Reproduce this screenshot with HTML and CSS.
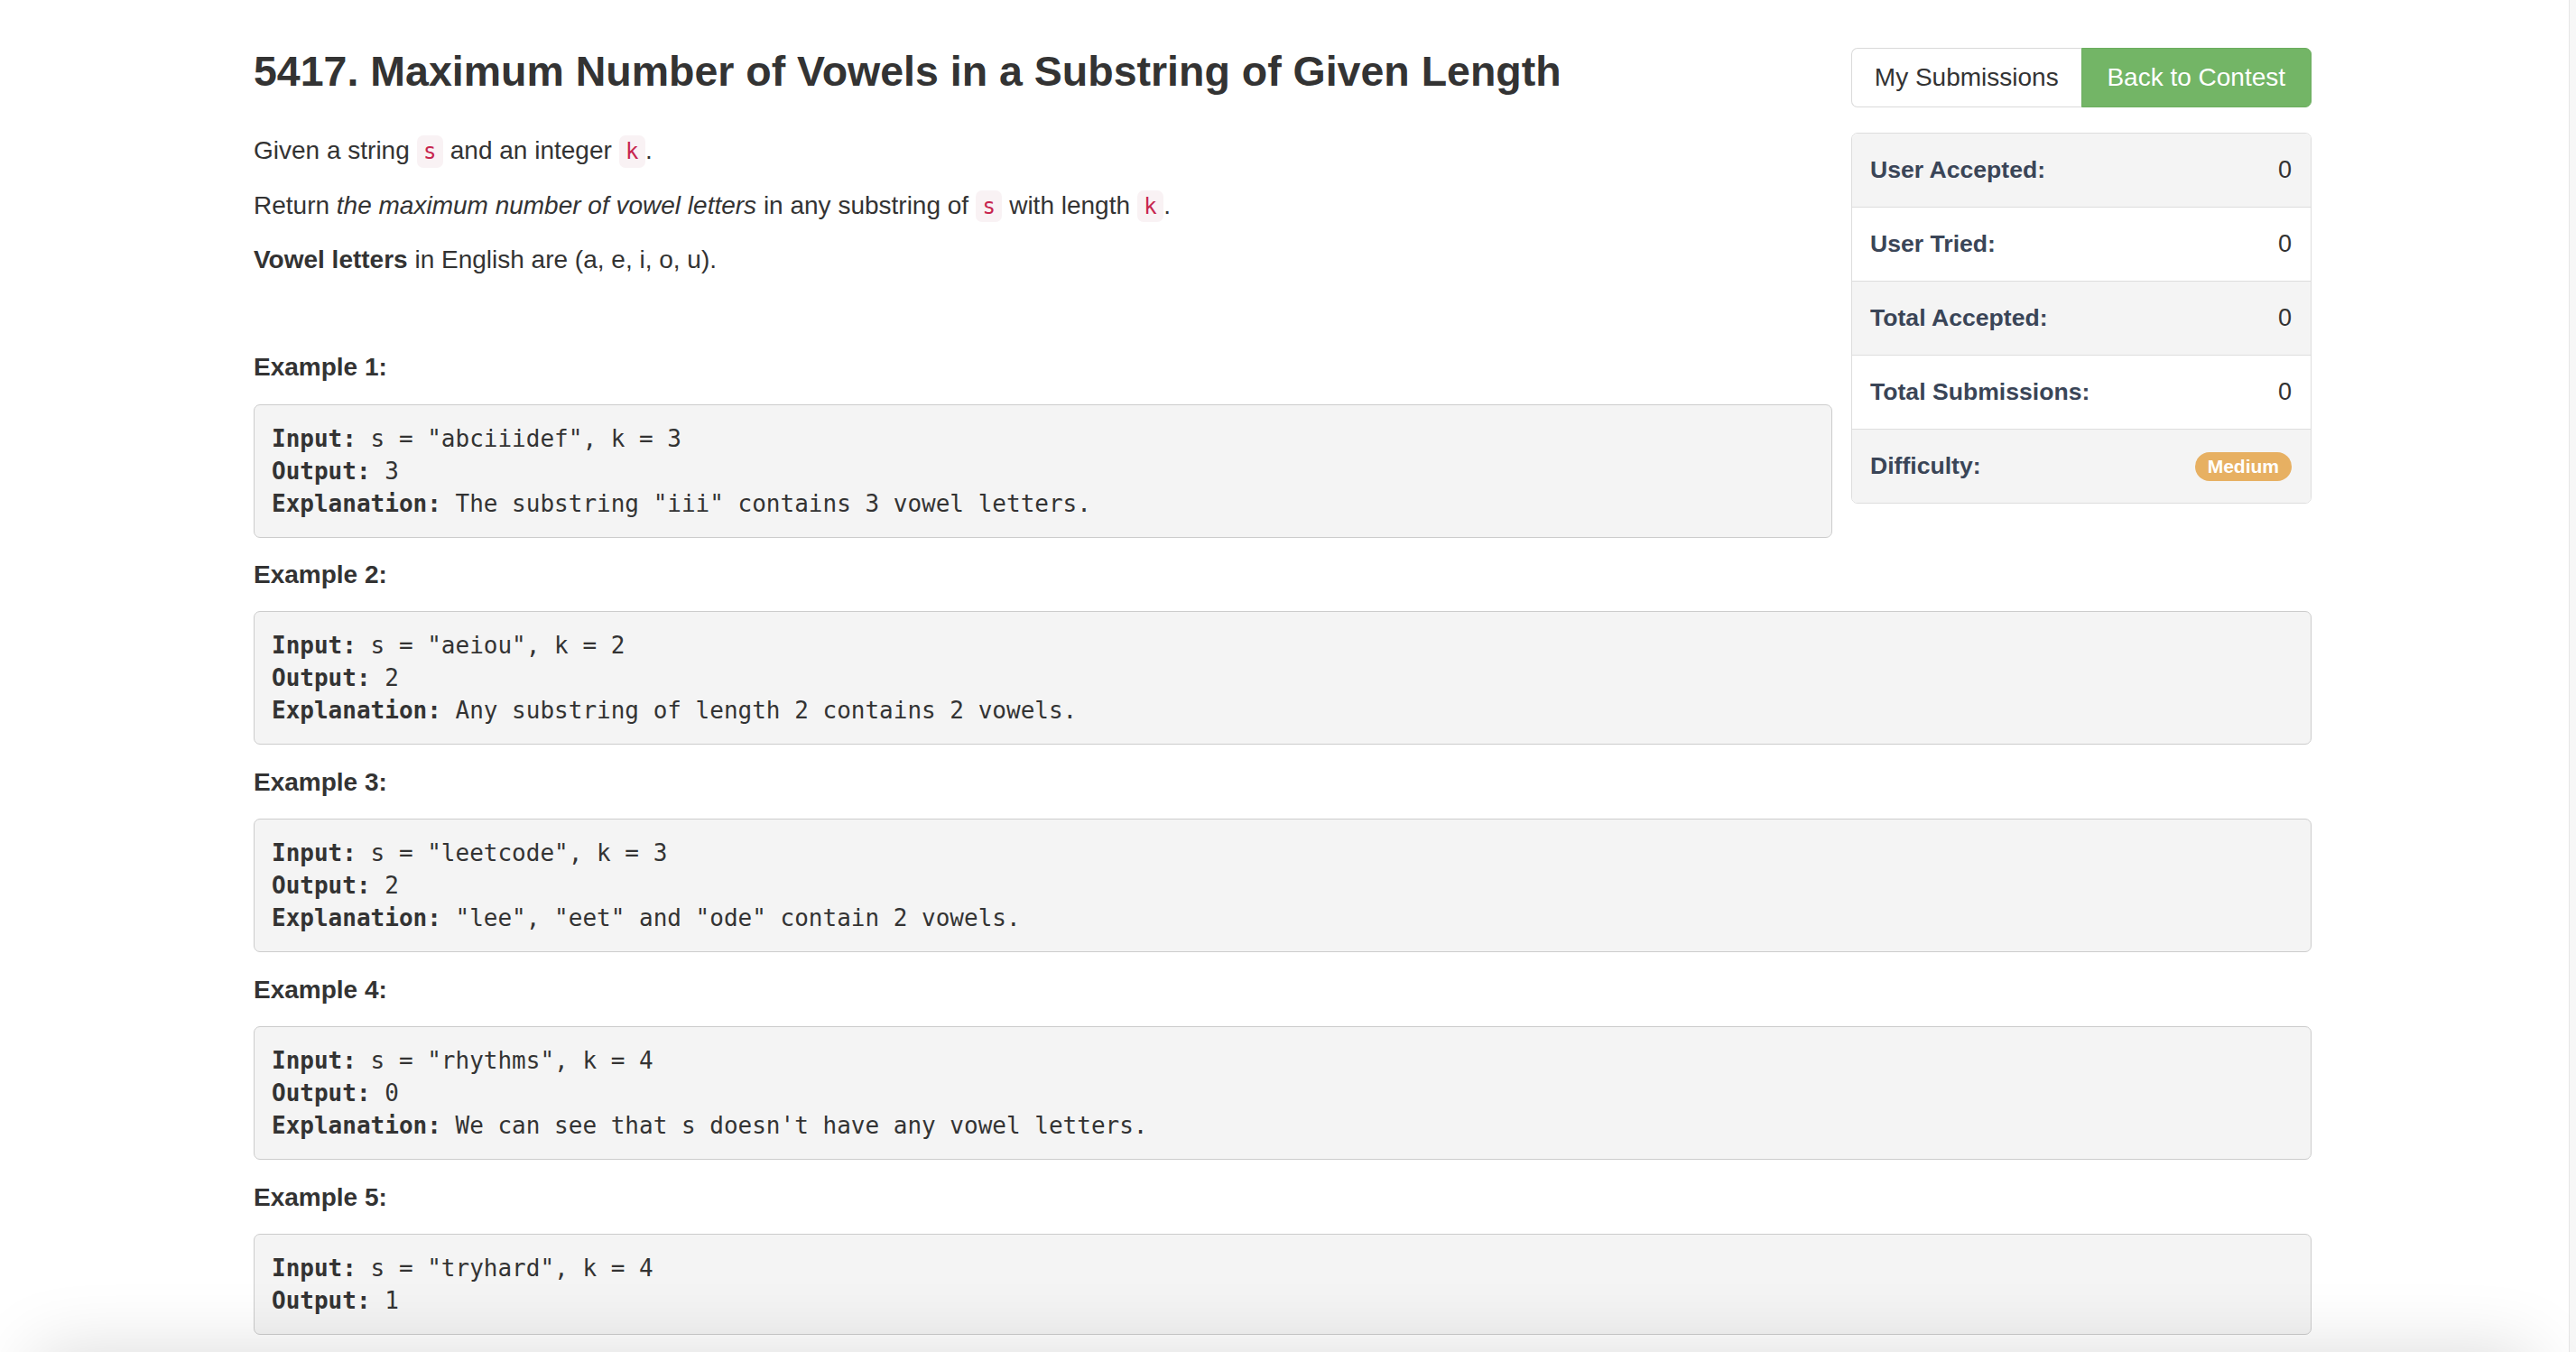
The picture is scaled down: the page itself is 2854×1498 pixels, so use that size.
FILE: index.html
```html
<!DOCTYPE html>
<html lang="en">
<head>
<meta charset="utf-8">
<title>5417. Maximum Number of Vowels in a Substring of Given Length</title>
<link rel="stylesheet" href="styles.css">
</head>
<body>
<div class="page">
  <main class="main">
    <div class="container">
      <aside class="sidebar">
        <div class="btn-group">
          <a class="btn btn-default">My Submissions</a>
          <a class="btn btn-success">Back to Contest</a>
        </div>
        <ul class="stats">
          <li class="stat-row"><span class="stat-label">User Accepted:</span><span class="stat-value">0</span></li>
          <li class="stat-row"><span class="stat-label">User Tried:</span><span class="stat-value">0</span></li>
          <li class="stat-row"><span class="stat-label">Total Accepted:</span><span class="stat-value">0</span></li>
          <li class="stat-row"><span class="stat-label">Total Submissions:</span><span class="stat-value">0</span></li>
          <li class="stat-row"><span class="stat-label">Difficulty:</span><span class="badge badge-medium">Medium</span></li>
        </ul>
      </aside>

      <h3 class="title">5417. Maximum Number of Vowels in a Substring of Given Length</h3>

      <div class="question">
        <p>Given a string <code>s</code> and an integer <code>k</code>.</p>
        <p>Return <em>the maximum number of vowel letters</em> in any substring of <code>s</code> with length <code>k</code>.</p>
        <p><strong>Vowel letters</strong> in English are (a, e, i, o, u).</p>
        <p>&nbsp;</p>
        <p><strong>Example 1:</strong></p>
<pre><strong>Input:</strong> s = "abciiidef", k = 3
<strong>Output:</strong> 3
<strong>Explanation:</strong> The substring "iii" contains 3 vowel letters.</pre>
        <p><strong>Example 2:</strong></p>
<pre><strong>Input:</strong> s = "aeiou", k = 2
<strong>Output:</strong> 2
<strong>Explanation:</strong> Any substring of length 2 contains 2 vowels.</pre>
        <p><strong>Example 3:</strong></p>
<pre><strong>Input:</strong> s = "leetcode", k = 3
<strong>Output:</strong> 2
<strong>Explanation:</strong> "lee", "eet" and "ode" contain 2 vowels.</pre>
        <p><strong>Example 4:</strong></p>
<pre><strong>Input:</strong> s = "rhythms", k = 4
<strong>Output:</strong> 0
<strong>Explanation:</strong> We can see that s doesn't have any vowel letters.</pre>
        <p><strong>Example 5:</strong></p>
<pre><strong>Input:</strong> s = "tryhard", k = 4
<strong>Output:</strong> 1</pre>
      </div>
    </div>
  </main>
  <div class="scroll-track"></div>
</div>
<div class="bottom-shade"></div>
</body>
</html>
```

FILE: styles.css
```css
html, body {
  margin: 0;
  padding: 0;
  height: 100%;
  overflow: hidden;
  background: #ffffff;
}

body {
  font-family: "Liberation Sans", Arial, Helvetica, sans-serif;
  font-size: 28px;
  color: #333333;
}

.page {
  display: flex;
  height: 100%;
}

.main {
  flex: 1 1 auto;
  min-width: 0;
}

.scroll-track {
  flex: 0 0 7px;
  border-left: 1px solid #e6e6e6;
  background: #f7f7f7;
}

.container {
  width: 2280px;
  margin: 0 auto;
  padding-top: 53px;
  transform: translateX(-2px);
}

/* Sidebar */
.sidebar {
  float: right;
  width: 510px;
  margin-left: 21px;
}

.btn-group {
  display: flex;
  height: 66px;
}

.btn {
  flex: 1 1 0;
  display: flex;
  align-items: center;
  justify-content: center;
  font-size: 28px;
  text-decoration: none;
  box-sizing: border-box;
  border: 1px solid #dadada;
}

.btn-default {
  background: #ffffff;
  color: #333333;
  border-radius: 7px 0 0 7px;
  border-right: none;
}

.btn-success {
  background: #73b566;
  border-color: #6cad5f;
  color: #ffffff;
  border-radius: 0 7px 7px 0;
}

.stats {
  list-style: none;
  margin: 28px 0 0;
  padding: 0;
  border: 1px solid #dddddd;
  border-radius: 7px;
  overflow: hidden;
}

.stat-row {
  display: flex;
  align-items: center;
  justify-content: space-between;
  height: 81px;
  padding: 0 21px 0 20px;
  background: #f4f4f4;
}

.stat-row + .stat-row {
  border-top: 1px solid #dddddd;
}

.stat-row:nth-child(even) {
  background: #ffffff;
}

.stat-label {
  font-weight: bold;
  font-size: 26.6px;
  color: #3a4557;
}

.stat-value {
  font-size: 27px;
  color: #333333;
}

.badge {
  display: inline-block;
  font-weight: bold;
  font-size: 21px;
  line-height: 24px;
  padding: 4px 14px;
  border-radius: 16px;
  color: #ffffff;
}

.badge-medium {
  background: #e7b062;
}

/* Title */
.title {
  margin: 0 0 42px;
  font-size: 46.5px;
  line-height: 53px;
  font-weight: bold;
  color: #333333;
}

/* Question body */
.question p {
  margin: 0 0 21.5px;
  line-height: 38px;
}

.question code {
  font-family: "DejaVu Sans Mono", "Liberation Mono", monospace;
  font-size: 24px;
  color: #c7254e;
  background: #f9f2f4;
  padding: 3.6px 7.5px;
  border-radius: 7px;
}

.question pre {
  font-family: "DejaVu Sans Mono", "Liberation Mono", monospace;
  font-size: 26px;
  line-height: 36px;
  color: #333333;
  background: #f4f4f4;
  border: 1px solid #cccccc;
  border-radius: 7px;
  padding: 19px 19px;
  margin: 0 0 22.4px;
  overflow: auto;
  white-space: pre;
}

.question pre strong {
  font-weight: bold;
}

/* Bottom fade overlay */
.bottom-shade {
  position: fixed;
  left: 40px;
  right: 48px;
  bottom: -120px;
  height: 120px;
  box-shadow: 0 0 80px rgba(0, 0, 0, 0.15);
  pointer-events: none;
}
```
